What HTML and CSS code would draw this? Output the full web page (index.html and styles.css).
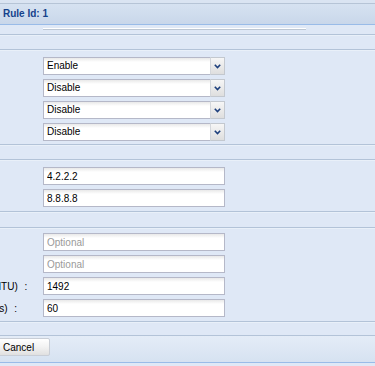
FILE: index.html
```html
<!DOCTYPE html>
<html>
<head>
<meta charset="utf-8">
<link rel="stylesheet" href="styles.css">
</head>
<body>
<div class="top"></div>
<div class="header">Rule Id: 1</div>
<div class="stub-row"><div class="stub"></div></div>

<div class="band"><span class="legend">Phase 1</span></div>
<div class="sec sec-b">
  <div class="row"><label class="lbl">PFS :</label><div class="select"><span class="sel-text">Enable</span><span class="trigger"><svg width="7" height="5" viewBox="0 0 7 5"><path d="M0.8 0.8 L3.5 3.6 L6.2 0.8" fill="none" stroke="#1d3f7c" stroke-width="1.6"/></svg></span></div></div>
  <div class="row"><label class="lbl">DPD :</label><div class="select"><span class="sel-text">Disable</span><span class="trigger"><svg width="7" height="5" viewBox="0 0 7 5"><path d="M0.8 0.8 L3.5 3.6 L6.2 0.8" fill="none" stroke="#1d3f7c" stroke-width="1.6"/></svg></span></div></div>
  <div class="row"><label class="lbl">NAT-T :</label><div class="select"><span class="sel-text">Disable</span><span class="trigger"><svg width="7" height="5" viewBox="0 0 7 5"><path d="M0.8 0.8 L3.5 3.6 L6.2 0.8" fill="none" stroke="#1d3f7c" stroke-width="1.6"/></svg></span></div></div>
  <div class="row"><label class="lbl">XAuth :</label><div class="select"><span class="sel-text">Disable</span><span class="trigger"><svg width="7" height="5" viewBox="0 0 7 5"><path d="M0.8 0.8 L3.5 3.6 L6.2 0.8" fill="none" stroke="#1d3f7c" stroke-width="1.6"/></svg></span></div></div>
</div>

<div class="band"><span class="legend">DNS</span></div>
<div class="sec sec-d">
  <div class="row"><label class="lbl">DNS 1:</label><input class="field" type="text" value="4.2.2.2"></div>
  <div class="row"><label class="lbl">DNS 2:</label><input class="field" type="text" value="8.8.8.8"></div>
</div>

<div class="band band-3"><span class="legend">Other</span></div>
<div class="sec sec-f">
  <div class="row"><label class="lbl">Local ID:</label><input class="field" type="text" placeholder="Optional"></div>
  <div class="row"><label class="lbl">Remote ID:</label><input class="field" type="text" placeholder="Optional"></div>
  <div class="row"><label class="lbl">Tunnel MTU (MTU) :</label><input class="field" type="text" value="1492"></div>
  <div class="row"><label class="lbl">Interval (seconds) :</label><input class="field" type="text" value="60"></div>
</div>

<div class="band band-4"></div>
<div class="footer">
  <button class="btn" type="button">Cancel</button>
</div>
</body>
</html>
```
FILE: styles.css
```css
html, body {
  margin: 0;
  padding: 0;
}
body {
  background: #dfe8f6;
  font-family: "Liberation Sans", Arial, sans-serif;
  font-size: 10px;
  color: #000;
  overflow: hidden;
}
.top {
  height: 3px;
  border-bottom: 1px solid #b6c4d6;
  background: #dae4f2;
}
.header {
  height: 20px;
  line-height: 20px;
  padding-left: 3px;
  border-bottom: 1px solid #99bbe8;
  background: linear-gradient(#d6e2f1, #c9d7ea);
  color: #15428b;
  font-weight: bold;
  font-size: 10px;
}
.stub-row {
  height: 9px;
  display: flex;
  align-items: flex-start;
}
.stub {
  margin-top: 3px;
  margin-left: 43px;
  width: 263px;
  height: 1px;
  background: #ffffff;
  border-bottom: 1px solid #bcc6d3;
}
.band {
  height: 14px;
  border-top: 1px solid #b3c3d8;
  box-shadow: inset 0 1px 0 #e9f0f9;
  overflow: hidden;
  display: flex;
  align-items: center;
}
.band-3 { height: 15px; }
.band-4 { height: 13px; }
.legend {
  margin-left: -76px;
  color: #15428b;
  font-weight: bold;
}
.sec {
  border-top: 1px solid #b3c3d8;
  box-shadow: inset 0 1px 0 #e9f0f9;
  display: flex;
  flex-direction: column;
  gap: 4px;
  padding-bottom: 4px;
  overflow: hidden;
}
.sec-b { padding-top: 7px; padding-bottom: 3px; }
.sec-d { padding-top: 7px; }
.sec-f { padding-top: 5px; }
.row {
  display: flex;
  align-items: center;
  height: 18px;
  margin-left: -76px;
}
.lbl {
  width: 119px;
  flex: none;
  white-space: nowrap;
  overflow: hidden;
  font-size: 10px;
  word-spacing: 4px;
  color: #000;
}
.field {
  box-sizing: border-box;
  width: 182px;
  height: 18px;
  margin: 0;
  padding: 0 3px;
  border: 1px solid #b5b8c8;
  background: linear-gradient(#e9e9e9, #ffffff 4px);
  font-family: "Liberation Sans", Arial, sans-serif;
  font-size: 10px;
  color: #000;
  outline: none;
}
.field::placeholder {
  color: #9a9a9a;
}
.select {
  display: flex;
  width: 182px;
  height: 18px;
  box-sizing: border-box;
}
.sel-text {
  flex: 1;
  box-sizing: border-box;
  height: 18px;
  line-height: 16px;
  padding-left: 3px;
  border: 1px solid #b5b8c8;
  border-right: none;
  background: linear-gradient(#e9e9e9, #ffffff 4px);
}
.trigger {
  width: 15px;
  height: 18px;
  box-sizing: border-box;
  border: 1px solid #c3c8cf;
  border-left-color: #d4d7dc;
  background: linear-gradient(#f6f6f6, #dedede);
  display: flex;
  align-items: center;
  justify-content: center;
}
.footer {
  border-top: 1px solid #b3c3d8;
  border-bottom: 1px solid #99bbe8;
  padding: 2px 0 6px 0;
  background: linear-gradient(#e4ecf7, #d6e2f1);
  display: flex;
}
.btn {
  margin: 0 0 0 -13px;
  height: 18px;
  padding: 0 15px;
  border: 1px solid #c9ced6;
  border-radius: 2px;
  background: linear-gradient(#ffffff, #f2f2f2 50%, #e0e0e0);
  font-family: "Liberation Sans", Arial, sans-serif;
  font-size: 10px;
  color: #000;
}
```
